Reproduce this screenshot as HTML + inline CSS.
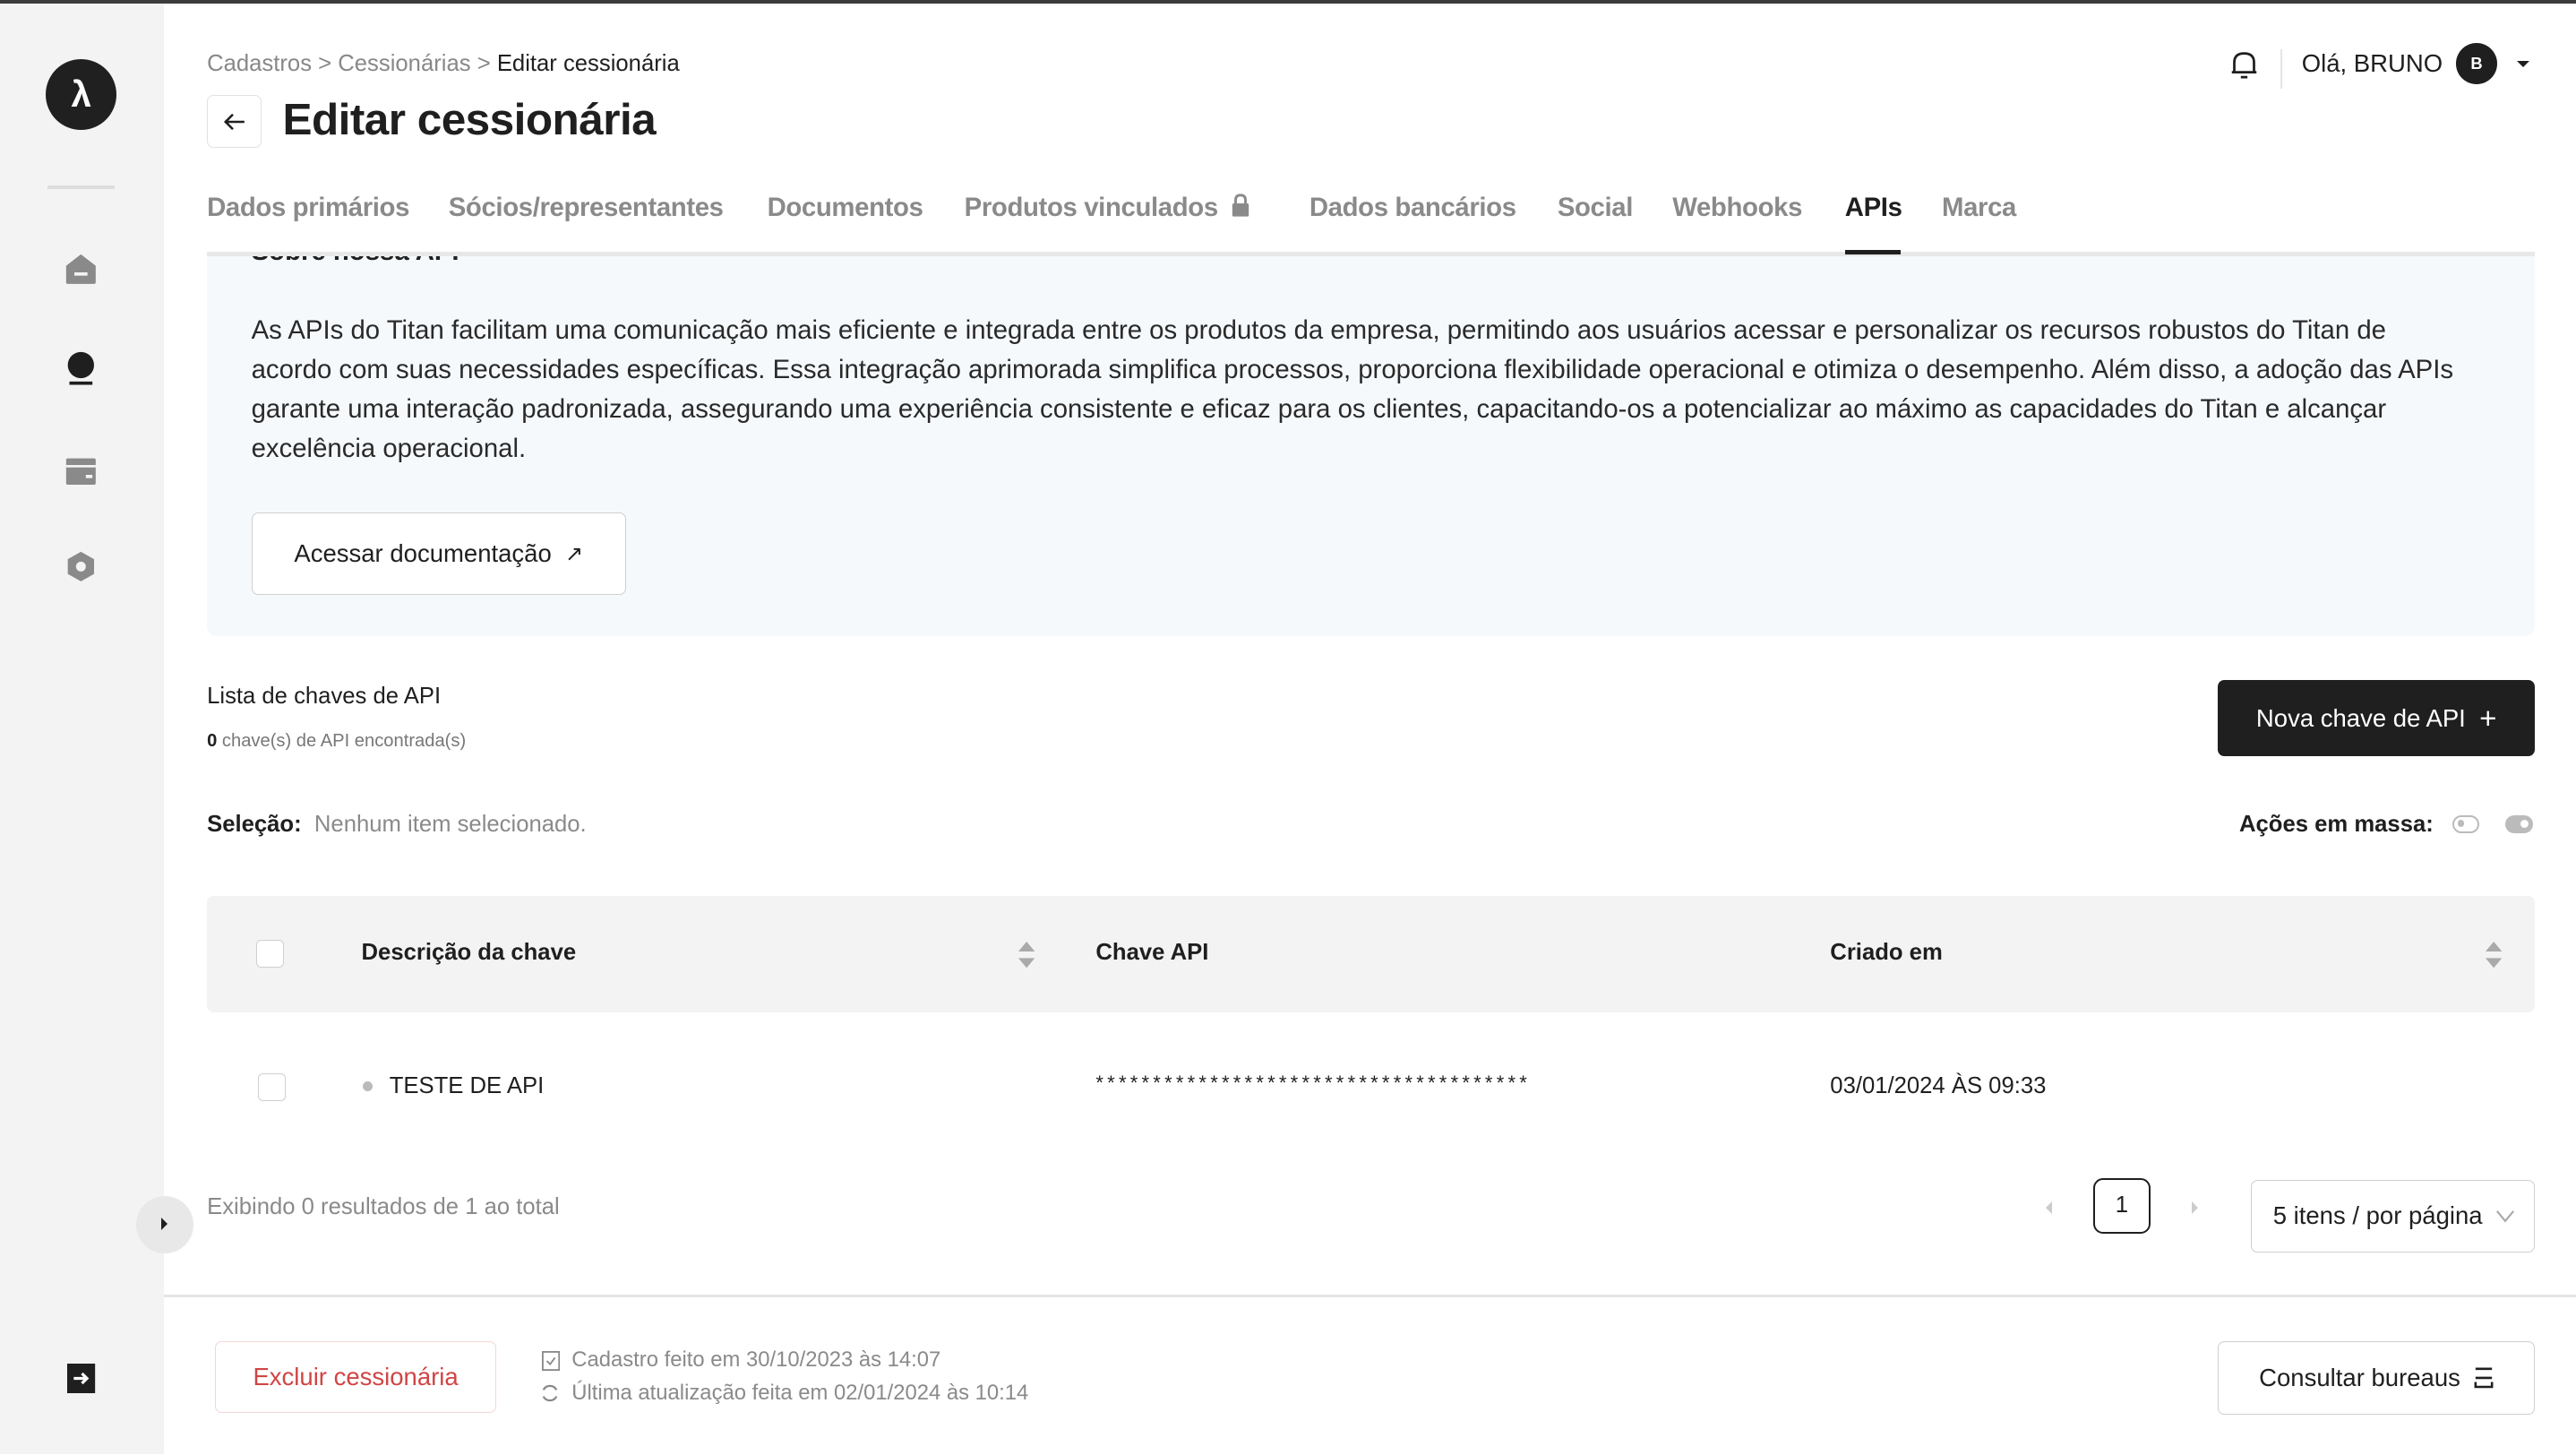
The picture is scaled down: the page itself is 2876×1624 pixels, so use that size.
<!DOCTYPE html>
<html><head><meta charset="utf-8"><style>
*{box-sizing:border-box;margin:0;padding:0}
html,body{width:2876px;height:1624px;overflow:hidden;background:#fff}
#w{zoom:1.8342;width:1568px;height:885px;position:relative;font-family:"Liberation Sans",sans-serif;color:#1f1f1f}
.a{position:absolute;white-space:nowrap}
.side{left:0;top:0;width:100px;height:885px;background:#f3f3f3}
.tab{top:117px;font-size:16px;color:#8a8a8a;font-weight:bold;letter-spacing:-.2px}
.btn{border:1px solid #cfcfcf;border-radius:4px;background:#fff;display:flex;align-items:center;justify-content:center}
.cb{width:17px;height:17px;border:1px solid #cfcfcf;border-radius:3px;background:#fff}
</style></head><body><div id="w">
<div class="a" style="left:0;top:0;width:1568px;height:2px;background:#3c3c3c;z-index:5"></div>
<div class="a side"></div>
<div class="a" style="left:28px;top:36px;width:43px;height:43px;border-radius:50%;background:#202020;color:#fff;font-size:22px;font-weight:bold;text-align:center;line-height:43px">λ</div>
<div class="a" style="left:29px;top:113px;width:41px;height:2px;background:#ddd"></div>
<svg class="a" style="left:39px;top:154px" width="20" height="20" viewBox="0 0 20 20"><path d="M10 1 L19 8 V18 Q19 19 18 19 H2 Q1 19 1 18 V8 Z" fill="#8a8a8a"/><rect x="6" y="12" width="8" height="2" fill="#f3f3f3"/></svg>
<svg class="a" style="left:39px;top:213px" width="20" height="22" viewBox="0 0 20 22"><circle cx="10" cy="9" r="8" fill="#1f1f1f"/><rect x="3" y="19" width="14" height="2" fill="#1f1f1f"/></svg>
<svg class="a" style="left:39px;top:277px" width="20" height="20" viewBox="0 0 20 20"><rect x="1" y="2" width="18" height="16" rx="1" fill="#8a8a8a"/><rect x="1" y="6" width="18" height="1.5" fill="#f3f3f3"/><rect x="13" y="12" width="4" height="2" fill="#f3f3f3"/></svg>
<svg class="a" style="left:39px;top:335px" width="20" height="20" viewBox="0 0 20 20"><path d="M10 1 L18 5.5 V14.5 L10 19 L2 14.5 V5.5 Z" fill="#8a8a8a"/><circle cx="10" cy="10" r="3" fill="#f3f3f3"/></svg>
<svg class="a" style="left:41px;top:830px" width="18" height="18" viewBox="0 0 18 18"><rect x="0" y="0" width="17" height="18" fill="#1f1f1f"/><path d="M4 9 H12 M9 6 L12 9 L9 12" stroke="#fff" stroke-width="1.8" fill="none"/></svg>
<div class="a" style="left:83px;top:728px;width:35px;height:35px;border-radius:50%;background:#e8e8e8"></div>
<div class="a" style="left:98px;top:741px;width:0;height:0;border-left:4px solid #1f1f1f;border-top:4px solid transparent;border-bottom:4px solid transparent"></div>

<div class="a" style="left:126px;top:31px;font-size:14px;color:#888">Cadastros &gt; Cessionárias &gt; <span style="color:#1f1f1f">Editar cessionária</span></div>
<div class="a btn" style="left:126px;top:58px;width:33px;height:32px;border-color:#e2e2e2"><svg width="14" height="12" viewBox="0 0 14 12"><path d="M13 6 H2 M6 1.5 L1.5 6 L6 10.5" stroke="#1f1f1f" stroke-width="1.4" fill="none"/></svg></div>
<div class="a" style="left:172px;top:57px;font-size:27px;font-weight:bold;letter-spacing:-.3px">Editar cessionária</div>

<svg class="a" style="left:1357px;top:30px" width="18" height="18" viewBox="0 0 18 18"><path d="M3 14 V8 Q3 2.5 9 2.5 Q15 2.5 15 8 V14 M1.5 14 H16.5 M7 17 H11" stroke="#1f1f1f" stroke-width="1.5" fill="none"/></svg>
<div class="a" style="left:1388px;top:30px;width:1px;height:24px;background:#e5e5e5"></div>
<div class="a" style="left:1401px;top:30px;font-size:15px">Olá, BRUNO</div>
<div class="a" style="left:1495px;top:26px;width:25px;height:25px;border-radius:50%;background:#1f1f1f;color:#fff;font-size:10px;font-weight:bold;text-align:center;line-height:25px">B</div>
<div class="a" style="left:1532px;top:37px;border-top:4px solid #1f1f1f;border-left:4px solid transparent;border-right:4px solid transparent"></div>

<div class="a tab" style="left:126px">Dados primários</div>
<div class="a tab" style="left:273px">Sócios/representantes</div>
<div class="a tab" style="left:467px">Documentos</div>
<div class="a tab" style="left:587px">Produtos vinculados</div>
<svg class="a" style="left:749px;top:118px" width="12" height="15" viewBox="0 0 12 15"><path d="M3 6 V4 Q3 1 6 1 Q9 1 9 4 V6" stroke="#8a8a8a" stroke-width="1.6" fill="none"/><rect x="1" y="6" width="10" height="8" rx="1" fill="#8a8a8a"/></svg>
<div class="a tab" style="left:797px">Dados bancários</div>
<div class="a tab" style="left:948px">Social</div>
<div class="a tab" style="left:1018px">Webhooks</div>
<div class="a tab" style="left:1123px;color:#1f1f1f">APIs</div>
<div class="a tab" style="left:1182px">Marca</div>

<div class="a" style="left:126px;top:156px;width:1417px;height:231px;background:#f6f9fc;border-radius:0 0 6px 6px;overflow:hidden">
 <div class="a" style="left:27px;top:-12px;font-size:16px;font-weight:bold">Sobre nossa API</div>
 <div class="a" style="left:27px;top:33px;font-size:16px;line-height:24px;color:#2a2a2a">As APIs do Titan facilitam uma comunicação mais eficiente e integrada entre os produtos da empresa, permitindo aos usuários acessar e personalizar os recursos robustos do Titan de<br>acordo com suas necessidades específicas. Essa integração aprimorada simplifica processos, proporciona flexibilidade operacional e otimiza o desempenho. Além disso, a adoção das APIs<br>garante uma interação padronizada, assegurando uma experiência consistente e eficaz para os clientes, capacitando-os a potencializar ao máximo as capacidades do Titan e alcançar<br>excelência operacional.</div>
 <div class="a btn" style="left:27px;top:156px;width:228px;height:50px;font-size:15px">Acessar documentação&nbsp;&nbsp;<span style="font-size:13px">↗</span></div>
</div>
<div class="a" style="left:126px;top:153px;width:1417px;height:3px;background:#e8e8e8"></div>
<div class="a" style="left:1123px;top:152px;width:34px;height:3px;background:#1f1f1f"></div>

<div class="a" style="left:126px;top:416px;font-size:14px">Lista de chaves de API</div>
<div class="a" style="left:126px;top:445px;font-size:11px;color:#777"><b style="color:#1f1f1f">0</b> chave(s) de API encontrada(s)</div>
<div class="a" style="left:1350px;top:414px;width:193px;height:46px;background:#1f1f1f;border-radius:4px;color:#fff;font-size:15px;display:flex;align-items:center;justify-content:center">Nova chave de API&nbsp;&nbsp;<span style="font-size:18px">+</span></div>

<div class="a" style="left:126px;top:494px;font-size:14px"><b>Seleção:</b>&nbsp; <span style="color:#8a8a8a">Nenhum item selecionado.</span></div>
<div class="a" style="left:1363px;top:494px;font-size:14px;font-weight:bold">Ações em massa:</div>
<div class="a" style="left:1493px;top:496px;width:16px;height:11px;border:1.5px solid #bbb;border-radius:6px"><div style="position:absolute;left:2px;top:2px;width:4px;height:4px;border-radius:50%;background:#bbb"></div></div>
<div class="a" style="left:1525px;top:496px;width:17px;height:11px;background:#bbb;border-radius:6px"><div style="position:absolute;right:3px;top:3px;width:5px;height:5px;border-radius:50%;background:#fff"></div></div>

<div class="a" style="left:126px;top:545px;width:1417px;height:71px;background:#f3f3f3;border-radius:4px"></div>
<div class="a cb" style="left:156px;top:572px"></div>
<div class="a" style="left:220px;top:572px;font-size:14px;font-weight:bold">Descrição da chave</div>
<div class="a" style="left:667px;top:572px;font-size:14px;font-weight:bold">Chave API</div>
<div class="a" style="left:1114px;top:572px;font-size:14px;font-weight:bold">Criado em</div>
<svg class="a" style="left:620px;top:573px" width="10" height="16" viewBox="0 0 10 16"><path d="M0 6 L5 0 L10 6Z M0 10 L5 16 L10 10Z" fill="#aaa"/></svg>
<svg class="a" style="left:1513px;top:573px" width="10" height="16" viewBox="0 0 10 16"><path d="M0 6 L5 0 L10 6Z M0 10 L5 16 L10 10Z" fill="#aaa"/></svg>

<div class="a cb" style="left:157px;top:653px"></div>
<div class="a" style="left:221px;top:658px;width:6px;height:6px;border-radius:50%;background:#bbb"></div>
<div class="a" style="left:237px;top:653px;font-size:14px">TESTE DE API</div>
<div class="a" style="left:667px;top:652px;font-size:12px;letter-spacing:2.3px">**************************************</div>
<div class="a" style="left:1114px;top:653px;font-size:14px">03/01/2024 ÀS 09:33</div>

<div class="a" style="left:126px;top:727px;font-size:14px;color:#8a8a8a">Exibindo 0 resultados de 1 ao total</div>
<div class="a" style="left:1245px;top:731px;border-right:4px solid #ccc;border-top:4px solid transparent;border-bottom:4px solid transparent"></div>
<div class="a" style="left:1274px;top:717px;width:35px;height:34px;border:1.5px solid #1f1f1f;border-radius:6px;font-size:14px;text-align:center;line-height:31px">1</div>
<div class="a" style="left:1334px;top:731px;border-left:4px solid #ccc;border-top:4px solid transparent;border-bottom:4px solid transparent"></div>
<div class="a btn" style="left:1370px;top:718px;width:173px;height:44px;justify-content:flex-start;padding-left:13px;font-size:15px">5 itens / por página<svg style="margin-left:8px" width="12" height="8" viewBox="0 0 12 8"><path d="M1 1 L6 7 L11 1" stroke="#aaa" stroke-width="1.2" fill="none"/></svg></div>

<div class="a" style="left:100px;top:788px;width:1468px;height:1.5px;background:#e5e5e5"></div>
<div class="a btn" style="left:131px;top:816px;width:171px;height:44px;border-color:#f3d6d6;color:#d04545;font-size:15px">Excluir cessionária</div>
<svg class="a" style="left:330px;top:822px" width="11" height="12" viewBox="0 0 11 12"><rect x="0.5" y="0.5" width="10" height="11" fill="none" stroke="#888"/><path d="M3 6 L5 8 L8 4" stroke="#888" fill="none"/></svg>
<div class="a" style="left:348px;top:820px;font-size:13px;color:#8a8a8a">Cadastro feito em 30/10/2023 às 14:07</div>
<svg class="a" style="left:329px;top:842px" width="12" height="12" viewBox="0 0 12 12"><path d="M10 4 A4.5 4.5 0 0 0 2 4 M2 8 A4.5 4.5 0 0 0 10 8" stroke="#888" stroke-width="1.2" fill="none"/></svg>
<div class="a" style="left:348px;top:840px;font-size:13px;color:#8a8a8a">Última atualização feita em 02/01/2024 às 10:14</div>
<div class="a btn" style="left:1350px;top:816px;width:193px;height:45px;font-size:15px">Consultar bureaus&nbsp;&nbsp;<svg width="12" height="13" viewBox="0 0 12 13"><path d="M1 1 H11 M1 6.5 H11 M1 9 V12 H11 V9" stroke="#1f1f1f" stroke-width="1.4" fill="none"/></svg></div>
</div></body></html>
